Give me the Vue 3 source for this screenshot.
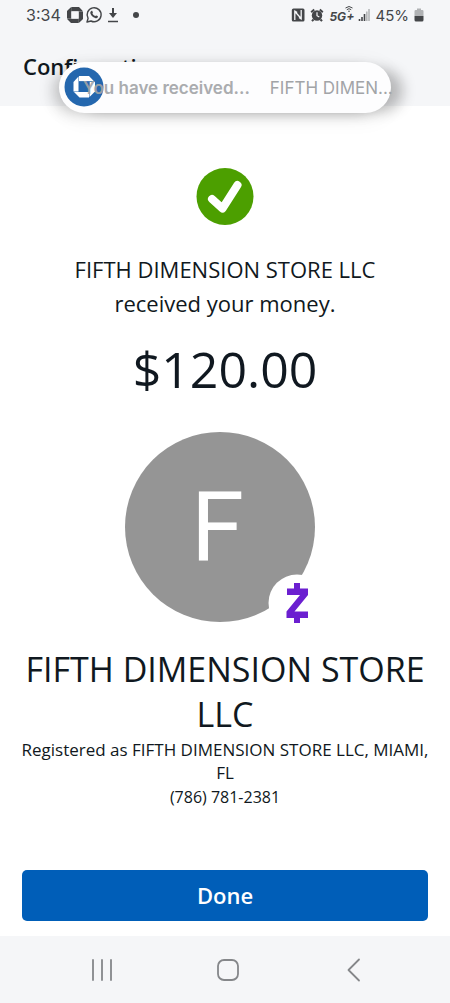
<script setup>
const payment = {
  recipient: 'FIFTH DIMENSION STORE LLC',
  amount: '$120.00',
  initial: 'F',
  location: 'MIAMI, FL',
  phone: '(786) 781-2381'
}
</script>

<template>
  <div class="screen">
    <header class="top">
      <div class="status">
        <div class="status-left">
          <span class="time">3:34</span>
          <svg width="18" height="18" viewBox="0 0 18 18" aria-hidden="true">
            <g fill="#444649">
              <path d="M5.4 1H13l3.400 3.600v1H5.400z" />
              <path d="M17 5.400V13l-3.600 3.400h-1V5.400z" />
              <path d="M12.600 17H5l-3.400-3.600v-1h11z" />
              <path d="M1 12.600V5l3.600-3.400h1v11z" />
            </g>
            <rect x="5.300" y="5.300" width="7.400" height="7.400" fill="#f5f6f8" />
          </svg>
          <svg width="18" height="18" viewBox="0 0 18 18" aria-hidden="true">
            <path d="M2 16l1.100-3.700A7 7 0 1 1 6 15z" fill="none" stroke="#444649" stroke-width="1.400" stroke-linejoin="round" />
            <path d="M6.300 4.900c.5-.3.900-.2 1.100.3l.5 1.200c.1.400-.6.900-.5 1.200.6 1.200 1.500 2 2.700 2.500.4.100.8-.8 1.200-.7l1.300.7c.5.200.4.700.2 1.100-.5.900-1.600 1.200-2.700.8-2.300-.7-4-2.300-4.700-4.500-.3-1 .1-2.100.9-2.600z" fill="#444649" />
          </svg>
          <svg class="download" width="12" height="16" viewBox="0 0 12 16" aria-hidden="true">
            <path d="M6 1v7" stroke="#444649" stroke-width="2" />
            <path d="M1 14.500h10" stroke="#444649" stroke-width="1.500" />
            <path d="M2 6h8l-4 5z" fill="#444649" />
          </svg>
          <span class="dot"></span>
        </div>
        <div class="status-right">
          <svg width="14" height="14" viewBox="0 0 14 14" aria-hidden="true">
            <path d="M2.500.5h9.500q1.500 0 1.500 1.500v10q0 1.500-1.500 1.500H2.500Q.8 13.500.8 12V2Q.8.500 2.500.5z" fill="#444649" />
            <path d="M3.800 12V3.500l6.400 7V2M3.800 3l2.400 1.500M10.200 11L8 9.500" fill="none" stroke="#f5f6f8" stroke-width="1.300" />
          </svg>
          <svg width="14" height="14" viewBox="0 0 14 14" aria-hidden="true">
            <circle cx="7" cy="7.500" r="5.200" fill="#444649" />
            <path d="M1.200 4.200L4.200 1.500M12.800 4.200L9.800 1.500M3.500 11.500L2 13.200M10.500 11.500l1.500 1.700" stroke="#444649" stroke-width="2" />
            <path d="M7 4.200v3.500l2.300 1.400" fill="none" stroke="#f5f6f8" stroke-width="1.200" />
          </svg>
          <span class="network">5G<span class="plus">+</span>
            <svg class="waves" width="8" height="6" viewBox="0 0 8 6" aria-hidden="true">
              <path d="M.5 2q3.500-3 7 0M1.800 3.700q2.200-2 4.400 0" fill="none" stroke="#444649" stroke-width="1" />
              <circle cx="4" cy="5.200" r=".8" fill="#444649" />
            </svg>
          </span>
          <svg width="12" height="14" viewBox="0 0 12 14" aria-hidden="true">
            <path d="M1.500 13v-2M4 13V9M6.500 13V6" stroke="#444649" stroke-width="1.600" />
            <path d="M8.800 13V3.500M11 13V1" stroke="#b5b7b9" stroke-width="1.600" />
          </svg>
          <span class="percent">45%</span>
          <svg width="10" height="14" viewBox="0 0 10 14" aria-hidden="true">
            <path d="M3 .5h4v1.500h1.300q1.200 0 1.200 1.200V8H.5V3.200Q.5 2 1.700 2H3z" fill="#b0b2b4" />
            <path d="M.5 8h9v4q0 1.500-1.500 1.500H2Q.5 13.500.5 12z" fill="#444649" />
          </svg>
        </div>
      </div>
      <h1>Confirmation</h1>
      <aside class="toast">
        <svg class="toast-logo" width="40" height="40" viewBox="0 0 40 40" aria-hidden="true">
          <circle cx="20" cy="20" r="19.500" fill="#2467ae" />
          <g fill="#fff">
            <path d="M15 9h10l5 5.300H15z" />
            <path d="M31 15v9.500L25.500 30V15z" />
            <path d="M25 30.500H15.500l-5.500-5.500h15z" />
            <path d="M9.500 24.500V15l5-5.500v15z" />
          </g>
          <path d="M15 14.500h10.500v10.300H15z" fill="#2467ae" />
        </svg>
        <strong>You have received...</strong>
        <span>FIFTH DIMEN...</span>
      </aside>
    </header>

    <main>
      <svg class="check" width="58" height="58" viewBox="0 0 58 58" role="img" aria-label="Success">
        <circle cx="29" cy="28.500" r="28.500" fill="#4c9f00" />
        <path d="M16 31l10.500 9.500L41.500 17" fill="none" stroke="#fff" stroke-width="8" stroke-linecap="round" stroke-linejoin="round" />
      </svg>
      <p class="message">{{ payment.recipient }}<br />received your money.</p>
      <p class="amount">{{ payment.amount }}</p>
      <div class="avatar">
        <span>{{ payment.initial }}</span>
        <svg class="badge" width="58" height="58" viewBox="0 0 58 58" role="img" aria-label="Zelle">
          <circle cx="29" cy="29" r="28.500" fill="#fff" />
          <path d="M26 9h6v5.500h8v6.500L26.500 37.500H40V44h-8v5h-6v-5h-7.500v-6.500L32 21H19v-6.500h7z" fill="#6b1fd0" />
        </svg>
      </div>
      <h2>{{ payment.recipient }}</h2>
      <p class="details">Registered as {{ payment.recipient }}, {{ payment.location }}</p>
      <p class="phone">{{ payment.phone }}</p>
      <button class="done" type="button">Done</button>
    </main>

    <nav>
      <button type="button" aria-label="Recent apps">
        <svg width="24" height="24" viewBox="0 0 24 24"><path d="M3 2v20M12 2v20M21 2v20" /></svg>
      </button>
      <button type="button" aria-label="Home">
        <svg width="24" height="24" viewBox="0 0 24 24"><rect x="2" y="2" width="20" height="20" rx="6" /></svg>
      </button>
      <button type="button" aria-label="Back">
        <svg width="24" height="24" viewBox="0 0 24 24"><path d="M17 1.500L6.500 12 17 22.500" /></svg>
      </button>
    </nav>
  </div>
</template>

<style>
body {
  margin: 0;
  background: #fff;
}
</style>

<style scoped>
.screen {
  min-height: 100vh;
  display: flex;
  flex-direction: column;
  font-family: "Open Sans", "Noto Sans", sans-serif;
  color: #101820;
}
h1, h2, p {
  margin: 0;
  font-weight: 400;
}
.top {
  position: relative;
  height: 106px;
  background: #f5f6f8;
}
.status {
  display: flex;
  justify-content: space-between;
  align-items: center;
  height: 30px;
  padding: 0 26px;
  font-family: Inter, Roboto, sans-serif;
  font-size: 16px;
  color: #444649;
}
.status-left, .status-right {
  display: flex;
  align-items: center;
}
.status-left {
  gap: 1px;
}
.time {
  margin-right: 4px;
}
.download {
  margin: 0 13px 0 3px;
}
.dot {
  width: 6px;
  height: 6px;
  border-radius: 50%;
  background: #444649;
}
.status-right {
  gap: 5px;
}
.percent {
  font-size: 15px;
}
.network {
  position: relative;
  width: 24px;
  font-size: 12px;
  font-style: italic;
  font-weight: 700;
  line-height: 12px;
  padding-top: 3px;
  white-space: nowrap;
}
.waves {
  position: absolute;
  top: -2px;
  right: 0;
}
h1 {
  padding: 19px 23px 0;
  font-size: 22px;
  line-height: 34px;
  font-weight: 600;
}
.toast {
  position: absolute;
  top: 62px;
  left: 59px;
  right: 59px;
  height: 51px;
  display: flex;
  align-items: center;
  border-radius: 26px;
  background: #fdfdfe;
  box-shadow: 0 4px 22px rgba(0, 0, 0, 0.07), -10px 3px 16px -5px rgba(0, 0, 0, 0.22), 17px 3px 14px -5px rgba(0, 0, 0, 0.24);
  font-family: Inter, Roboto, sans-serif;
  font-size: 17px;
  color: #a2a4a7;
  white-space: nowrap;
}
.toast-logo {
  position: absolute;
  left: 5px;
  top: 5px;
}
.toast strong {
  position: relative;
  margin: 0 20px 0 24px;
  font-weight: 600;
  opacity: 0.9;
}
main {
  flex: 1;
  display: flex;
  flex-direction: column;
  align-items: center;
  padding: 62px 20px 15px;
  text-align: center;
}
.check {
  flex: none;
}
.message {
  margin-top: 26px;
  font-size: 22px;
  line-height: 34px;
}
.amount {
  margin-top: 14px;
  font-size: 50px;
  line-height: 70px;
}
.avatar {
  position: relative;
  box-sizing: border-box;
  display: flex;
  justify-content: center;
  width: 190px;
  height: 190px;
  margin: 28px 10px 0 0;
  padding-right: 5px;
  border-radius: 50%;
  background: #959595;
  color: #fff;
  font-family: Roboto, sans-serif;
  font-size: 96px;
  line-height: 190px;
}
.badge {
  position: absolute;
  right: -11px;
  bottom: -10px;
}
h2 {
  margin-top: 25px;
  font-size: 34px;
  line-height: 45px;
}
.details {
  margin-top: 1px;
  font-size: 17px;
  line-height: 23px;
}
.phone {
  font-size: 16px;
  line-height: 26px;
}
.done {
  align-self: stretch;
  height: 51px;
  margin: auto 2px 0;
  padding: 0 0 2px;
  border: 0;
  border-radius: 5px;
  background: #005eb8;
  color: #fff;
  font: 600 22px "Open Sans", sans-serif;
}
nav {
  display: flex;
  justify-content: space-around;
  align-items: center;
  height: 67px;
  padding: 0 33px 0 39px;
  background: #f5f6f8;
}
nav button {
  display: grid;
  padding: 8px;
  border: 0;
  background: none;
}
nav svg {
  fill: none;
  stroke: #85878a;
  stroke-width: 1.8;
  stroke-linecap: round;
  stroke-linejoin: round;
}
</style>
